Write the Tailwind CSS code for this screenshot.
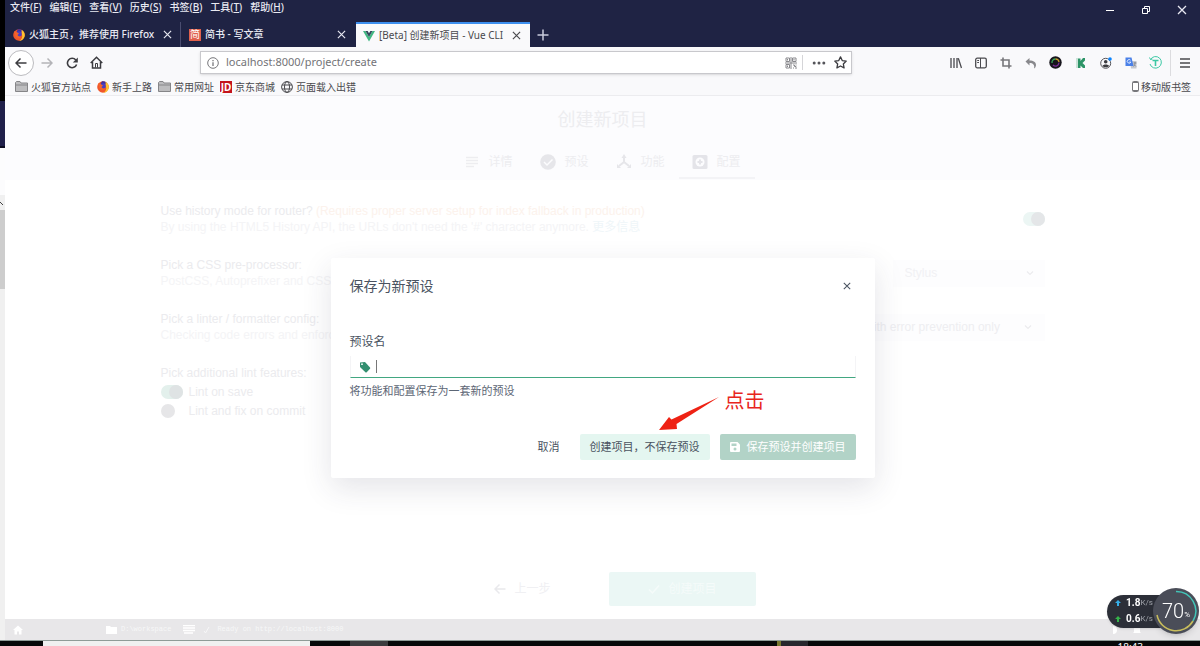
<!DOCTYPE html>
<html lang="zh-CN">
<head>
<meta charset="utf-8">
<title>[Beta] 创建新项目 - Vue CLI</title>
<script src="https://cdn.jsdelivr.net/npm/@tailwindcss/browser@4"></script>
</head>
<body class="flex h-screen flex-col overflow-hidden bg-white font-['Noto_Sans','Noto_Sans_CJK_SC',sans-serif] text-[10px] text-[#4a4a4e]">

<svg class="hidden">
  <symbol id="x" viewBox="0 0 10 10"><path d="M1 1l8 8M9 1L1 9" fill="none" stroke="currentColor" stroke-width="1.3"/></symbol>
  <symbol id="fox" viewBox="0 0 12 12"><circle cx="6" cy="6" r="5.8" fill="#f0562c"/><path d="M5 .3A5.8 5.8 0 0 1 9.500 1.500L7 5 3.500 3z" fill="#3b2fa0"/><circle cx="6" cy="5" r="2.800" fill="#4a3fc0"/><path d="M8.500.8c2 1.200 3.300 3 3.300 5.400A5.800 5.800 0 0 1 6 11.900C9 10.500 9.800 8 9 5.500z" fill="#ffc52e"/><path d="M1 2.300c.8 0 1.800.2 2.500.8L6 4.500 4.500 6c1 1.500 2.500 1.800 4 1.200C7.500 9.500 4 9.500 2.500 7.500z" fill="#f4652a"/></symbol>
  <symbol id="folder" viewBox="0 0 13 11"><path d="M.5 10V1.500L1.500.5h3.500l1 1.500h6.500v8.500H.5z" fill="#bdbdbf" stroke="#858588"/><path d="M1 4h11" stroke="#858588"/></symbol>
  <symbol id="chev" viewBox="0 0 8 6"><path d="M1 1.500l3 3 3-3" fill="none" stroke="currentColor" stroke-width="1.200"/></symbol>
</svg>

<div class="flex min-h-0 flex-1">
  <!-- edge of the window behind -->
  <div class="flex w-[5px] shrink-0 flex-col bg-[#f0f0f0]">
    <div class="h-[101px] bg-black"></div>
    <div class="h-[47px] border-b-2 border-[#0b0b20] bg-[#20204a]"></div>
    <div class="h-[47px] bg-[#fcfcfd]"></div>
    <div class="flex h-[15px] items-center overflow-hidden"><svg class="h-1 w-1" viewBox="0 0 4 4"><path d="M0 1l3 3" stroke="#444" fill="none"/></svg></div>
    <div class="h-[79px] bg-[#cdcdcd]"></div>
  </div>

  <div class="flex min-w-0 flex-1 flex-col">
    <header class="flex h-[47px] flex-col justify-between bg-[#1f2344] text-[#e8e9f2]">
      <div class="flex h-[22px] items-start justify-between">
        <nav class="flex gap-2 pl-[5px] font-medium leading-[14px]">
          <button>文件(<u>F</u>)</button><button>编辑(<u>E</u>)</button><button>查看(<u>V</u>)</button><button>历史(<u>S</u>)</button><button>书签(<u>B</u>)</button><button>工具(<u>T</u>)</button><button>帮助(<u>H</u>)</button>
        </nav>
        <div class="flex h-5 items-center">
          <button aria-label="最小化" class="flex w-9 justify-center"><svg class="h-[10px] w-[10px]" viewBox="0 0 10 10"><path d="M1 5.500h8" stroke="#fff"/></svg></button>
          <button aria-label="还原" class="flex w-9 justify-center"><svg class="h-[10px] w-[10px]" viewBox="0 0 10 10"><path d="M1.500 3.500h5v5h-5zM3.500 3V1.500h5v5H7" fill="none" stroke="#fff"/></svg></button>
          <button aria-label="关闭" class="flex w-9 justify-center"><svg class="h-[10px] w-[10px]"><use href="#x"/></svg></button>
        </div>
      </div>
      <div class="flex h-[25px]">
        <div class="flex w-[176px] items-center gap-1 border-r border-[#4a4d70] pr-2 pl-2">
          <svg class="h-3 w-3 shrink-0"><use href="#fox"/></svg>
          <span class="flex-1 whitespace-nowrap font-medium">火狐主页，推荐使用 Firefox</span>
          <button aria-label="关闭标签页"><svg class="h-[9px] w-[9px]"><use href="#x"/></svg></button>
        </div>
        <div class="flex w-[175px] items-center gap-1 pr-[10px] pl-2">
          <span class="flex h-3 w-3 items-center justify-center bg-[#e0604c] text-white">简</span>
          <span class="flex-1 font-medium">简书 - 写文章</span>
          <button aria-label="关闭标签页"><svg class="h-[9px] w-[9px]"><use href="#x"/></svg></button>
        </div>
        <div class="flex w-[174px] items-center gap-1 border-t-2 border-[#3d8fef] bg-[#f9f9fb] pr-[9px] pl-[7px] text-[#4a4a4e]">
          <svg class="h-3 w-3" viewBox="0 0 12 12"><path d="M0 1h2.500L6 7l3.500-6H12L6 11.500z" fill="#41b883"/><path d="M2.500 1h2.200L6 3.200 7.300 1h2.200L6 7z" fill="#35495e"/></svg>
          <span class="flex-1 whitespace-nowrap">[Beta] 创建新项目 - Vue CLI</span>
          <button aria-label="关闭标签页"><svg class="h-[9px] w-[9px]"><use href="#x"/></svg></button>
        </div>
        <button aria-label="新标签页" class="ml-[7px] flex items-center"><svg class="h-3 w-3" viewBox="0 0 12 12"><path d="M6 .5v11M.5 6h11" stroke="#c9cbdc" stroke-width="1.500"/></svg></button>
      </div>
    </header>

    <div class="flex h-[31px] items-center bg-[#f9f9fb] pr-1 pl-[3px]">
      <button aria-label="后退" class="flex h-[26px] w-[26px] items-center justify-center rounded-full border border-[#bbbbbf] bg-white"><svg class="h-3 w-3" viewBox="0 0 12 12"><path d="M11.500 6H1M5.500 1.500L1 6l4.500 4.500" fill="none" stroke="#3c3c40" stroke-width="1.500"/></svg></button>
      <button aria-label="前进" class="flex w-[25px] justify-center"><svg class="h-3 w-3" viewBox="0 0 12 12"><path d="M.5 6H11M6.500 1.500L11 6l-4.500 4.500" fill="none" stroke="#b4b4b8" stroke-width="1.500"/></svg></button>
      <button aria-label="刷新" class="flex w-[25px] justify-center"><svg class="h-3 w-3" viewBox="0 0 12 12"><path d="M9.800 3A4.700 4.700 0 1 0 10.600 7.500" fill="none" stroke="#3c3c40" stroke-width="1.600"/><path d="M11.800.5v5H6.800z" fill="#3c3c40"/></svg></button>
      <button aria-label="主页" class="flex w-[25px] justify-center"><svg class="h-[13px] w-[13px]" viewBox="0 0 13 13"><path d="M.7 7l5.800-5.700L12.300 7M2.500 6v6h8V6" fill="none" stroke="#3c3c40" stroke-width="1.500"/><path d="M5.500 11.500v-4h2v4" fill="none" stroke="#3c3c40"/></svg></button>
      <div class="mr-[91px] ml-[91px] flex h-[23px] flex-1 items-center border border-[#c8c8cc] bg-white px-[6px] shadow-sm">
        <svg class="h-3 w-3 shrink-0" viewBox="0 0 12 12"><circle cx="6" cy="6" r="5.300" fill="none" stroke="#77777b"/><path d="M6 5.300V9M6 3v1.300" stroke="#77777b" stroke-width="1.300"/></svg>
        <input aria-label="网址" class="ml-[7px] min-w-0 flex-1 text-[11px] text-[#737377] outline-none" value="localhost:8000/project/create">
        <button aria-label="二维码"><svg class="h-3 w-3" viewBox="0 0 12 12"><path d="M1 1h3.500v3.500H1zM7.500 1H11v3.500H7.500zM1 7.500h3.500V11H1zM6 0v6H0M12 6H6v6M8 8h1.500v1.500H11V12M8 11h1M11 7.500v1M2.500 2v1.500M9 2v1.500M2.500 8.500V10" fill="none" stroke="#88888c"/></svg></button>
        <span class="mx-[5px] h-[15px] w-px bg-[#d5d5d8]"></span>
        <button aria-label="页面操作" class="ml-1"><svg class="h-3 w-[14px]" viewBox="0 0 14 12"><g fill="#55555a"><circle cx="2.200" cy="6" r="1.500"/><circle cx="7" cy="6" r="1.500"/><circle cx="11.800" cy="6" r="1.500"/></g></svg></button>
        <button aria-label="收藏" class="-mr-[2px] ml-2"><svg class="h-[13px] w-[13px]" viewBox="0 0 12 12"><path d="M6 .8l1.600 3.400 3.700.5-2.700 2.600.7 3.700L6 9.200 2.700 11l.7-3.700L.7 4.700l3.700-.5z" fill="none" stroke="#3c3c40" stroke-width="1.200" stroke-linejoin="round"/></svg></button>
      </div>
      <div class="flex items-center">
        <button aria-label="书库" class="flex w-[25px] justify-center"><svg class="h-3 w-3" viewBox="0 0 12 12"><path d="M1 1v10M4 1v10M7 1v10M8.300 1.200L11.500 11" stroke="#4a4a4e" stroke-width="1.300"/></svg></button>
        <button aria-label="侧栏" class="flex w-[25px] justify-center"><svg class="h-3 w-3" viewBox="0 0 12 12"><rect x=".7" y="1.200" width="10.600" height="9.600" rx="1.500" fill="none" stroke="#4a4a4e" stroke-width="1.300"/><path d="M5.500 1v10M2.200 3.500H4M2.200 5.500H4" stroke="#4a4a4e"/></svg></button>
        <button aria-label="截图" class="flex w-[25px] justify-center"><svg class="h-3 w-3" viewBox="0 0 12 12"><path d="M3 .5V9h8.500M.5 3H9v8.500" fill="none" stroke="#77777b" stroke-width="1.600"/></svg></button>
        <button aria-label="撤销" class="flex w-[25px] justify-center"><svg class="h-3 w-3" viewBox="0 0 12 12"><path d="M.5 4.500L4.500 1v2.500c4 0 6.500 1.500 6.500 4.500 0 1.500-1 3-2 3.500C10 8 8 6 4.500 6v2.500z" fill="#88888c"/></svg></button>
        <button aria-label="取色" class="flex w-[25px] justify-center"><svg class="h-[13px] w-[13px]" viewBox="0 0 13 13"><circle cx="6.500" cy="6.500" r="6.200" fill="#17151c"/><path d="M3 7a3.500 3.500 0 0 1 3.500-4" stroke="#39a85c" stroke-width="1.300" fill="none"/><path d="M6.500 3A3.500 3.500 0 0 1 10 6" stroke="#c59a2c" stroke-width="1.300" fill="none"/><path d="M10 6.500A3.500 3.500 0 0 1 4 9" stroke="#7a2c96" stroke-width="1.300" fill="none"/></svg></button>
        <button aria-label="K 扩展" class="flex w-[25px] justify-center"><svg class="h-3 w-3" viewBox="0 0 12 12"><path d="M3 1.500h2.500V4L8 1h2v10H8L5.500 8.500V11H3z" fill="#2d9467"/><path d="M10.500 3L7.500 6l3 3z" fill="#f9f9fb"/><path d="M2 1v10" stroke="#9bcdb5"/></svg></button>
        <button aria-label="账户" class="flex w-[25px] justify-center"><svg class="h-3 w-3" viewBox="0 0 12 12"><circle cx="5.700" cy="6.300" r="5" fill="none" stroke="#55555a"/><circle cx="5.700" cy="4.800" r="1.800" fill="#3c3c40"/><path d="M2.500 9c.5-2 6-2 6.500 0-1.500 1.800-5 1.800-6.500 0z" fill="#3c3c40"/><circle cx="10" cy="2" r="1.800" fill="#0a84ff"/></svg></button>
        <button aria-label="翻译" class="flex w-[25px] justify-center"><svg class="h-3 w-3" viewBox="0 0 12 12"><path d="M5 4h6.500v7.500H6z" fill="#c5c8cf"/><path d="M.5.500h6l2 8.500h-8z" fill="#4a80e8"/><path d="M5.500 3.200A1.800 1.800 0 1 0 5.800 5H4.300" fill="none" stroke="#fff" stroke-width=".8"/><path d="M8.500 6h3M10 5v1c0 2-1 3-1.500 3.500M9 7.500l2 2" stroke="#777b85" stroke-width=".7" fill="none"/></svg></button>
        <button aria-label="T 扩展" class="flex w-[25px] justify-center"><svg class="h-[13px] w-[13px]" viewBox="0 0 13 13"><path d="M1.500 3.500A5.800 5.800 0 1 1 1 8M.5 1.500l1 2 2-.5" fill="none" stroke="#3cc8a4"/><path d="M3.500 4.500h6M6.500 4.500V10" stroke="#3cc8a4" stroke-width="1.600"/></svg></button>
        <span class="mx-[2px] h-[26px] w-px bg-[#dcdcdf]"></span>
        <button aria-label="菜单" class="flex w-[23px] justify-center"><svg class="h-3 w-3" viewBox="0 0 12 12"><path d="M1 2h10M1 6h10M1 10h10" stroke="#4a4a4e" stroke-width="1.300"/></svg></button>
      </div>
    </div>

    <div class="flex h-[18px] items-center justify-between border-b border-[#ececef] bg-[#f9f9fb] pr-[9px] pl-[10px] leading-4">
      <div class="flex items-center gap-[6px]">
        <a href="#" class="flex items-center gap-[3px]"><svg class="h-[11px] w-[13px]"><use href="#folder"/></svg>火狐官方站点</a>
        <a href="#" class="flex items-center gap-[3px]"><svg class="h-3 w-3"><use href="#fox"/></svg>新手上路</a>
        <a href="#" class="flex items-center gap-[3px]"><svg class="h-[11px] w-[13px]"><use href="#folder"/></svg>常用网址</a>
        <a href="#" class="flex items-center gap-[3px]"><span class="flex h-3 w-3 items-center justify-center bg-[#c4141c] font-bold leading-3 text-white">JD</span>京东商城</a>
        <a href="#" class="flex items-center gap-[3px]"><svg class="h-3 w-3" viewBox="0 0 12 12"><g fill="none" stroke="#4a4a4e"><circle cx="6" cy="6" r="5.400"/><ellipse cx="6" cy="6" rx="2.500" ry="5.400"/><path d="M1 4h10M1 8h10"/></g></svg>页面载入出错</a>
      </div>
      <a href="#" class="flex items-center gap-[2px]"><svg class="h-[11px] w-[7px]" viewBox="0 0 7 11"><rect x=".5" y=".5" width="6" height="10" rx="1" fill="#fff" stroke="#77777b"/><path d="M1 1.500h5M1 9.500h5" stroke="#77777b"/></svg>移动版书签</a>
    </div>

    <main class="relative flex min-h-0 flex-1 flex-col bg-white font-['Liberation_Sans','Noto_Sans_CJK_SC',sans-serif] text-xs">
      <div class="flex h-[84px] flex-col items-center justify-between bg-[#fcfcfe] pb-[1px] text-[#ededf0]">
        <h1 class="pt-3 text-lg leading-6">创建新项目</h1>
        <nav class="flex">
          <a href="#" class="flex h-[34px] w-[76px] items-center justify-center gap-2"><svg class="h-4 w-4" viewBox="0 0 16 16"><path d="M2 3.500h12M2 6.500h12M2 9.500h12M2 12.500h8" stroke="currentColor" stroke-width="1.500"/></svg>详情</a>
          <a href="#" class="flex h-[34px] w-[76px] items-center justify-center gap-2"><svg class="h-4 w-4" viewBox="0 0 16 16"><circle cx="8" cy="8" r="7.800" fill="#e6e6ea"/><path d="M4 8l3 3 5.500-5.500" fill="none" stroke="#fcfcfe" stroke-width="1.500"/></svg>预设</a>
          <a href="#" class="flex h-[34px] w-[76px] items-center justify-center gap-2"><svg class="h-4 w-4" viewBox="0 0 16 16"><path d="M8 3v5l-5 4M8 8l5 4" fill="none" stroke="#e6e6ea" stroke-width="2"/><path d="M8 0l2.500 4h-5zM1 14v-4l4 4zM15 14v-4l-4 4z" fill="#e6e6ea"/></svg>功能</a>
          <a href="#" class="flex h-[34px] w-[76px] items-center justify-center gap-2 border-b-2 border-[#f3f3f6] pt-[2px]"><svg class="h-4 w-4" viewBox="0 0 16 16"><rect x=".5" y="1" width="15" height="14" rx="1.500" fill="#e4e4e9"/><circle cx="8" cy="8" r="4.500" fill="#fcfcfe"/><path d="M8 5.500v5M5.500 8h5" stroke="#e4e4e9" stroke-width="2"/></svg>配置</a>
        </nav>
      </div>

      <div class="mx-auto flex w-full max-w-[884px] flex-1 flex-col pt-3 leading-4 text-[#ebebee]">
        <div class="flex h-[54px] items-center justify-between">
          <div><p>Use history mode for router? <span class="text-[#fcf2ec]">(Requires proper server setup for index fallback in production)</span></p><p class="text-[#f4f4f6]">By using the HTML5 History API, the URLs don't need the '#' character anymore. <a href="#" class="text-[#eff6f9]">更多信息</a></p></div>
          <label class="flex h-[14px] w-[22px] justify-end rounded-full bg-[#ecf6f4]"><input type="checkbox" checked aria-label="Use history mode" class="h-[14px] w-[14px] appearance-none rounded-full bg-[#e4e6e8]"></label>
        </div>
        <div class="flex h-[54px] items-center justify-between">
          <div><p>Pick a CSS pre-processor:</p><p class="text-[#f4f4f6]">PostCSS, Autoprefixer and CSS Modules are supported by default</p></div>
          <div class="flex w-[152px] items-center bg-[#fdfdfe] pr-[11px] pl-3"><select aria-label="CSS pre-processor" class="h-[27px] flex-1 appearance-none text-[#f1f1f4]"><option>Stylus</option></select><svg class="h-[6px] w-2"><use href="#chev"/></svg></div>
        </div>
        <div class="flex h-[54px] items-center justify-between">
          <div><p>Pick a linter / formatter config:</p><p class="text-[#f4f4f6]">Checking code errors and enforcing an homogeneous code style is recommended.</p></div>
          <div class="flex w-[230px] items-center bg-[#fdfdfe] pr-[13px] pl-3"><select aria-label="Linter config" class="h-[27px] flex-1 appearance-none text-[#eeeef1]"><option>ESLint with error prevention only</option></select><svg class="h-[6px] w-2"><use href="#chev"/></svg></div>
        </div>
        <fieldset>
          <legend class="pt-[11px] pb-[3px]">Pick additional lint features:</legend>
          <div class="flex flex-col items-start gap-[3px]">
            <label class="flex items-center gap-[6px]"><span class="flex h-[14px] w-[22px] justify-end rounded-full bg-[#e3f0ec]"><input type="checkbox" checked class="h-[14px] w-[14px] appearance-none rounded-full bg-[#dfe3e4]"></span>Lint on save</label>
            <label class="flex items-center gap-[6px]"><span class="flex h-[14px] w-[22px] rounded-full"><input type="checkbox" class="h-[14px] w-[14px] appearance-none rounded-full bg-[#e6e6e8]"></span>Lint and fix on commit</label>
          </div>
        </fieldset>
      </div>

      <div class="flex justify-center gap-[13px] pb-[13px]">
        <button class="flex h-[34px] w-[147px] items-center justify-center gap-2 text-[#f0f0f3]"><svg class="h-3 w-3" viewBox="0 0 12 12"><path d="M11.500 6H1M5.500 1.500L1 6l4.500 4.500" fill="none" stroke="#e9e9ec" stroke-width="1.500"/></svg>上一步</button>
        <button class="flex h-[34px] w-[147px] items-center justify-center gap-2 rounded-xs bg-[#ebf7f5] text-[#f5fbfa]"><svg class="h-3 w-3" viewBox="0 0 12 12"><path d="M1 6.500l3.500 3.500L11 2.500" fill="none" stroke="currentColor" stroke-width="1.500"/></svg>创建项目</button>
      </div>

      <footer class="flex h-[21px] items-center bg-[#e8e7e9] pl-2 font-['Liberation_Mono',monospace] text-[7px] text-[#f7f7f8]">
        <svg class="h-[10px] w-[10px]" viewBox="0 0 10 10"><path d="M5 .5l5 4.500H8.500v4.500H6v-3H4v3H1.500V5H0z" fill="#fff"/></svg>
        <svg class="ml-[83px] h-2 w-[11px]" viewBox="0 0 11 8"><path d="M0 0h4l1 1h6v7H0z" fill="#fff"/></svg>
        <span class="ml-1">D:\workspace</span>
        <svg class="ml-3 h-[10px] w-3" viewBox="0 0 12 10"><path d="M0 .5h12M0 3h12M0 5.500h12M1 8h9" stroke="#fff" stroke-width="1.300"/></svg>
        <svg class="ml-2 h-2 w-2" viewBox="0 0 8 8"><path d="M1 5l1.500 2L6 1" fill="none" stroke="#f7f7f8"/></svg>
        <span class="ml-[6px]">Ready on http://localhost:8000</span>
        <svg class="mr-4 ml-auto h-2 w-2" viewBox="0 0 8 8"><path d="M4 0a4 4 0 0 1 0 8z" fill="#fff"/></svg>
        <svg class="mr-[59px] h-2 w-2" viewBox="0 0 8 8"><path d="M1 6V3a3 3 0 0 1 6 0v3l1 1H0z" fill="#fff"/></svg>
      </footer>

      <div class="absolute inset-0 flex items-center justify-center">
        <div role="dialog" aria-labelledby="dlg" class="relative flex w-[544px] flex-col rounded-xs bg-white px-[19px] pt-4 pb-[18px] text-[#4a5361] shadow-[0_10px_30px_rgba(50,45,75,0.13)]">
          <div class="flex h-6 items-center justify-between">
            <h2 id="dlg" class="text-sm">保存为新预设</h2>
            <button aria-label="关闭" class="mr-[5px]"><svg class="h-2 w-2"><use href="#x"/></svg></button>
          </div>
          <label for="preset" class="mt-[34px] leading-5">预设名</label>
          <div class="mt-1 flex h-[22px] items-center gap-[5px] border-x border-b border-x-[#f4f4f6] border-b-[#42a781] px-2">
            <svg class="h-3 w-3" viewBox="0 0 12 12"><path d="M1 1.500L6 1l5 5.500a1 1 0 0 1 0 1.200L7.700 11.200a1 1 0 0 1-1.300 0L1 6z" fill="#338f70"/><circle cx="3" cy="3.200" r=".9" fill="#fff"/></svg>
            <span class="h-[13px] w-px bg-[#777]"></span>
            <input id="preset" class="min-w-0 flex-1 outline-none">
          </div>
          <p class="mt-1 text-[11px] leading-[18px] text-[#5c6675]">将功能和配置保存为一套新的预设</p>
          <div class="mt-[34px] flex h-[26px] justify-end gap-[10px] text-[11px]">
            <button class="px-[10px]">取消</button>
            <button class="rounded-xs bg-[#e4f6f0] px-[10px]">创建项目，不保存预设</button>
            <button class="flex items-center gap-[7px] rounded-xs bg-[#b2d3c7] px-[10px] text-white"><svg class="h-[10px] w-[10px]" viewBox="0 0 10 10"><path d="M1 0h6.500L10 2.500V9a1 1 0 0 1-1 1H1a1 1 0 0 1-1-1V1a1 1 0 0 1 1-1z" fill="#fff"/><path d="M1.500 1.500h5V4h-5z" fill="#b2d3c7"/><circle cx="5" cy="7" r="1.500" fill="#b2d3c7"/></svg>保存预设并创建项目</button>
          </div>
          <!-- annotation -->
          <div class="absolute top-[129px] right-[110px] flex items-start gap-[6px] text-xl leading-7 text-[#e8261c]">
            <svg class="mt-[9px] h-[36px] w-[62px]" viewBox="0 0 62 36"><path d="M62 1L19.500 28l.5 5L2 34l10-13 2.500 2.500z" fill="#ee2214"/></svg>点击
          </div>
        </div>
      </div>
    </main>
  </div>
</div>

<div class="flex h-[6px] shrink-0 overflow-hidden border-t border-[#8f9b97] bg-[#070909] leading-3 text-white">
  <div class="ml-[43px] w-[267px] bg-[#f0f0f0]"></div>
  <div class="ml-10 w-[38px] bg-[#3b3c3e]"></div>
  <div class="ml-[389px] w-[4px] bg-[#77772e]"></div>
  <div class="w-[27px] bg-[#27272d]"></div>
  <span class="mr-[57px] ml-auto">18:43</span>
</div>

<!-- network and memory monitor -->
<div class="fixed right-[1px] bottom-[12px] flex h-[46px] w-[92px] items-center font-['Roboto','Noto_Sans',sans-serif]">
  <div class="flex h-[33px] w-[72px] flex-col justify-center rounded-full bg-[#2c2f38] pl-2 leading-4 text-white shadow">
    <div class="flex items-center"><svg class="mr-[5px] h-[6px] w-[6px]" viewBox="0 0 6 6"><path d="M3 0l3 3H4v3H2V3H0z" fill="#36aee8"/></svg><b>1.8</b><span class="text-[8px] text-[#a0a3aa]">K/s</span></div>
    <div class="flex items-center"><svg class="mr-[5px] h-[6px] w-[6px]" viewBox="0 0 6 6"><path d="M3 0l3 3H4v3H2V3H0z" fill="#35b34a"/></svg><b>0.6</b><span class="text-[8px] text-[#a0a3aa]">K/s</span></div>
  </div>
  <div class="-ml-[26px] flex h-[46px] w-[46px] shrink-0 items-center justify-center rounded-full bg-[#4a4d58] text-white shadow-md">
    <svg class="absolute h-[46px] w-[46px]" viewBox="0 0 46 46"><g fill="none" stroke-width="1.500"><path d="M23 3.500A19.500 19.500 0 0 1 40 33" stroke="#42c5b8"/><path d="M40 33A19.500 19.500 0 0 1 4 27" stroke="#c8bd5c"/></g></svg>
    <span class="text-xl font-light">70</span><span class="pt-2 text-[8px]">%</span>
  </div>
</div>
</body>
</html>
